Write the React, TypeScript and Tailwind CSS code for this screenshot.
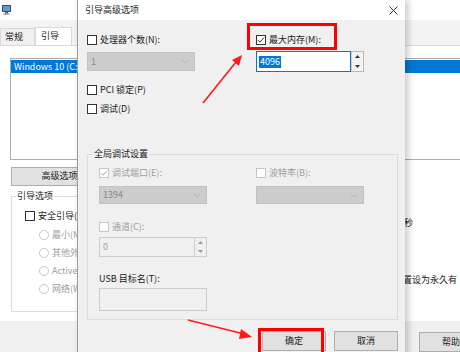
import React from "react";

const font = "font-['Noto_Sans_CJK_SC','Microsoft_YaHei',sans-serif]";

function Check({ checked = false, disabled = false }: { checked?: boolean; disabled?: boolean }) {
  return (
    <div
      className={`w-[10px] h-[10px] shrink-0 border bg-white flex items-center justify-center ${
        disabled ? "border-[#c4c4c4]" : "border-[#333333]"
      }`}
    >
      {checked ? (
        <svg width="8" height="8" viewBox="0 0 8 8">
          <path d="M1 4.2 L3 6.2 L7 1.6" fill="none" stroke={disabled ? "#a8a8a8" : "#333"} strokeWidth="1" />
        </svg>
      ) : null}
    </div>
  );
}

function CheckRow({
  label,
  checked,
  disabled,
}: {
  label: string;
  checked?: boolean;
  disabled?: boolean;
}) {
  return (
    <div className="h-[12px] flex items-center gap-[3px]">
      <Check checked={checked} disabled={disabled} />
      <span className={`text-[9px] leading-[12px] whitespace-nowrap ${disabled ? "text-[#a0a0a0]" : "text-[#1a1a1a]"}`}>
        {label}
      </span>
    </div>
  );
}

function Chevron() {
  return (
    <svg width="8" height="5" viewBox="0 0 8 5">
      <path d="M0.5 0.5 L4 4 L7.5 0.5" fill="none" stroke="#b4b4b4" strokeWidth="1" />
    </svg>
  );
}

function Combo({ value, h }: { value: string; h: string }) {
  return (
    <div className={`w-[108px] ${h} bg-[#cccccc] border border-[#c2c2c2] flex items-center justify-between pl-[3px] pr-[5px]`}>
      <span className="text-[9px] leading-[12px] text-[#8a8a8a]">{value}</span>
      <Chevron />
    </div>
  );
}

function SpinArrows({ color }: { color: string }) {
  return (
    <div className="w-[12px] h-full flex flex-col border-l border-[#d0d0d0]">
      <div className="flex-1 flex items-center justify-center">
        <svg width="5" height="3" viewBox="0 0 5 3">
          <path d="M0 3 L2.5 0 L5 3 Z" fill={color} />
        </svg>
      </div>
      <div className="flex-1 flex items-center justify-center">
        <svg width="5" height="3" viewBox="0 0 5 3">
          <path d="M0 0 L2.5 3 L5 0 Z" fill={color} />
        </svg>
      </div>
    </div>
  );
}

function Radio({ label }: { label: string }) {
  return (
    <div className="h-[18px] flex items-center gap-[3px]">
      <div className="w-[10px] h-[10px] rounded-full border border-[#c8c8c8] bg-white shrink-0" />
      <span className="text-[9px] leading-[12px] text-[#a0a0a0] whitespace-nowrap">{label}</span>
    </div>
  );
}

function MainWindow() {
  return (
    <div className="flex flex-col w-[560px] h-[352px]">
      <div className="h-[20px] bg-white flex items-center pl-[2px]">
        <svg width="10" height="10" viewBox="0 0 10 10">
          <rect x="0.5" y="0.5" width="8" height="6" fill="#5b9bd5" stroke="#4a4a4a" strokeWidth="1" />
          <rect x="3" y="7" width="3" height="1.5" fill="#6a6a6a" />
          <rect x="1.5" y="8.5" width="6" height="1" fill="#6a6a6a" />
        </svg>
      </div>
      <div className="h-[25px] bg-[#f3f3f3] flex items-end">
        <div className="w-[35px] h-[17px] border border-b-0 border-[#d9d9d9] bg-[#f0f0f0] flex items-center pl-[4px] text-[9px] leading-[12px] text-[#1a1a1a]">
          常规
        </div>
        <div className="w-[37px] h-[18px] border border-b-0 border-[#d9d9d9] bg-white flex items-center pl-[5px] text-[9px] leading-[12px] text-[#1a1a1a]">
          引导
        </div>
      </div>
      <div className="h-[278px] bg-white border-t border-[#d9d9d9] flex flex-col">
        <div className="ml-[10px] mt-[12px] w-[540px] h-[102px] border border-[#adadad] pt-[1px]">
          <div className="h-[13px] bg-[#0078d7] text-white text-[9px] leading-[13px] pl-[3px]">
            Windows 10 (C:
          </div>
        </div>
        <div className="ml-[11px] mt-[7px] w-[116px] h-[19px] bg-[#e1e1e1] border border-[#adadad] flex items-center justify-center text-[9px] leading-[12px] text-[#1a1a1a]">
          高级选项(V)...
        </div>
        <div className="flex mt-[10px]">
          <div className="ml-[11px] w-[250px] h-[116px] border border-[#dcdcdc] flex flex-col">
            <div className="-mt-[7px] ml-[4px] self-start bg-white px-[1px] text-[9px] leading-[12px] text-[#1a1a1a]">
              引导选项
            </div>
            <div className="ml-[13px] mt-[8px]">
              <CheckRow label="安全引导(F)" />
            </div>
            <div className="ml-[27px] mt-[4px] flex flex-col">
              <Radio label="最小(M)" />
              <Radio label="其他外壳" />
              <Radio label="Active" />
              <Radio label="网络(W)" />
            </div>
          </div>
          <div className="ml-[133px] flex flex-col text-[9px] leading-[12px] text-[#1a1a1a]">
            <div className="mt-[21px] pl-[10px]">秒</div>
            <div className="mt-[45px] whitespace-nowrap">设置设为永久有</div>
          </div>
        </div>
      </div>
      <div className="flex-1 bg-[#f0f0f0] flex items-start">
        <div className="ml-[419px] mt-[11px] w-[64px] h-[20px] bg-[#e1e1e1] border border-[#adadad] flex items-center justify-center text-[9px] leading-[12px] text-[#1a1a1a]">
          帮助
        </div>
      </div>
    </div>
  );
}

function Dialog() {
  return (
    <div className="absolute left-[77px] top-0 w-[328px] h-[360px] flex flex-col border-l border-[#9c9c9c] shadow-[3px_0_7px_rgba(0,0,0,0.22)]">
      <div className="h-[20px] bg-white flex items-center justify-between pl-[7px] pr-[7px]">
        <span className="text-[9px] leading-[12px] text-[#1a1a1a]">引导高级选项</span>
        <svg width="9" height="9" viewBox="0 0 9 9">
          <path d="M0.5 0.5 L8.5 8.5 M8.5 0.5 L0.5 8.5" stroke="#333" strokeWidth="1" />
        </svg>
      </div>
      <div className="flex-1 bg-[#f0f0f0] pl-[9px] pt-[14px] flex flex-col">
        <div className="flex">
          <div className="w-[169px] flex flex-col">
            <CheckRow label="处理器个数(N):" />
            <div className="mt-[6px]">
              <Combo value="1" h="h-[19px]" />
            </div>
            <div className="mt-[13px]">
              <CheckRow label="PCI 锁定(P)" />
            </div>
            <div className="mt-[7px]">
              <CheckRow label="调试(D)" />
            </div>
          </div>
          <div className="flex flex-col">
            <CheckRow label="最大内存(M):" checked />
            <div className="mt-[5px] flex h-[21px]">
              <div className="w-[95px] h-full bg-white border border-[#0078d7] flex items-center pl-[2px]">
                <span className="bg-[#0078d7] text-white text-[9px] leading-[12px] px-[1px]">4096</span>
              </div>
              <div className="w-[13px] h-full border border-l-0 border-[#b9b9b9] bg-[#f3f3f3] flex">
                <SpinArrows color="#333" />
              </div>
            </div>
          </div>
        </div>

        <div className="mt-[39px] w-[311px] h-[166px] border border-[#dcdcdc] flex flex-col">
          <div className="-mt-[7px] ml-[5px] self-start bg-[#f0f0f0] px-[1px] text-[9px] leading-[12px] text-[#1a1a1a]">
            全局调试设置
          </div>
          <div className="flex pl-[11px] mt-[7px]">
            <div className="w-[157px] flex flex-col">
              <CheckRow label="调试端口(E):" checked disabled />
              <div className="mt-[7px]">
                <Combo value="1394" h="h-[18px]" />
              </div>
              <div className="mt-[17px]">
                <CheckRow label="通道(C):" disabled />
              </div>
              <div className="mt-[4px] w-[108px] h-[20px] bg-[#f0f0f0] border border-[#cccccc] flex">
                <div className="flex-1 flex items-center pl-[3px] text-[9px] leading-[12px] text-[#a0a0a0]">0</div>
                <SpinArrows color="#9a9a9a" />
              </div>
              <div className="mt-[16px] h-[12px] text-[9px] leading-[12px] text-[#1a1a1a]">USB 目标名(T):</div>
              <div className="mt-[3px] w-[108px] h-[23px] bg-[#f0f0f0] border border-[#cccccc]" />
            </div>
            <div className="flex flex-col">
              <CheckRow label="波特率(B):" disabled />
              <div className="mt-[7px]">
                <Combo value="" h="h-[18px]" />
              </div>
            </div>
          </div>
        </div>

        <div className="mt-[11px] w-[311px] flex justify-end gap-[8px]">
          <div className="w-[64px] h-[20px] bg-[#e1e1e1] border border-[#adadad] flex items-center justify-center text-[9px] leading-[12px] text-[#1a1a1a]">
            确定
          </div>
          <div className="w-[64px] h-[20px] bg-[#e1e1e1] border border-[#adadad] flex items-center justify-center text-[9px] leading-[12px] text-[#1a1a1a]">
            取消
          </div>
        </div>
      </div>
    </div>
  );
}

export default function App() {
  return (
    <div className={`relative w-[460px] h-[352px] overflow-hidden bg-white ${font}`}>
      <MainWindow />
      <Dialog />
      {/* annotations */}
      <div className="absolute left-[247px] top-[23px] w-[90px] h-[27px] border-[3px] border-[#ff0000]" />
      <div className="absolute left-[258px] top-[328px] w-[66px] h-[30px] border-[3px] border-[#ff0000]" />
      <svg className="absolute left-0 top-0" width="460" height="352" viewBox="0 0 460 352">
        <line x1="203" y1="103" x2="236" y2="62" stroke="#ff1a1a" strokeWidth="1.6" />
        <path d="M242 55 L232 60 L239 66 Z" fill="#ff1a1a" />
        <line x1="188" y1="320" x2="244" y2="334" stroke="#ff1a1a" strokeWidth="1.6" />
        <path d="M252 337 L241 329 L239 339 Z" fill="#ff1a1a" />
      </svg>
    </div>
  );
}
